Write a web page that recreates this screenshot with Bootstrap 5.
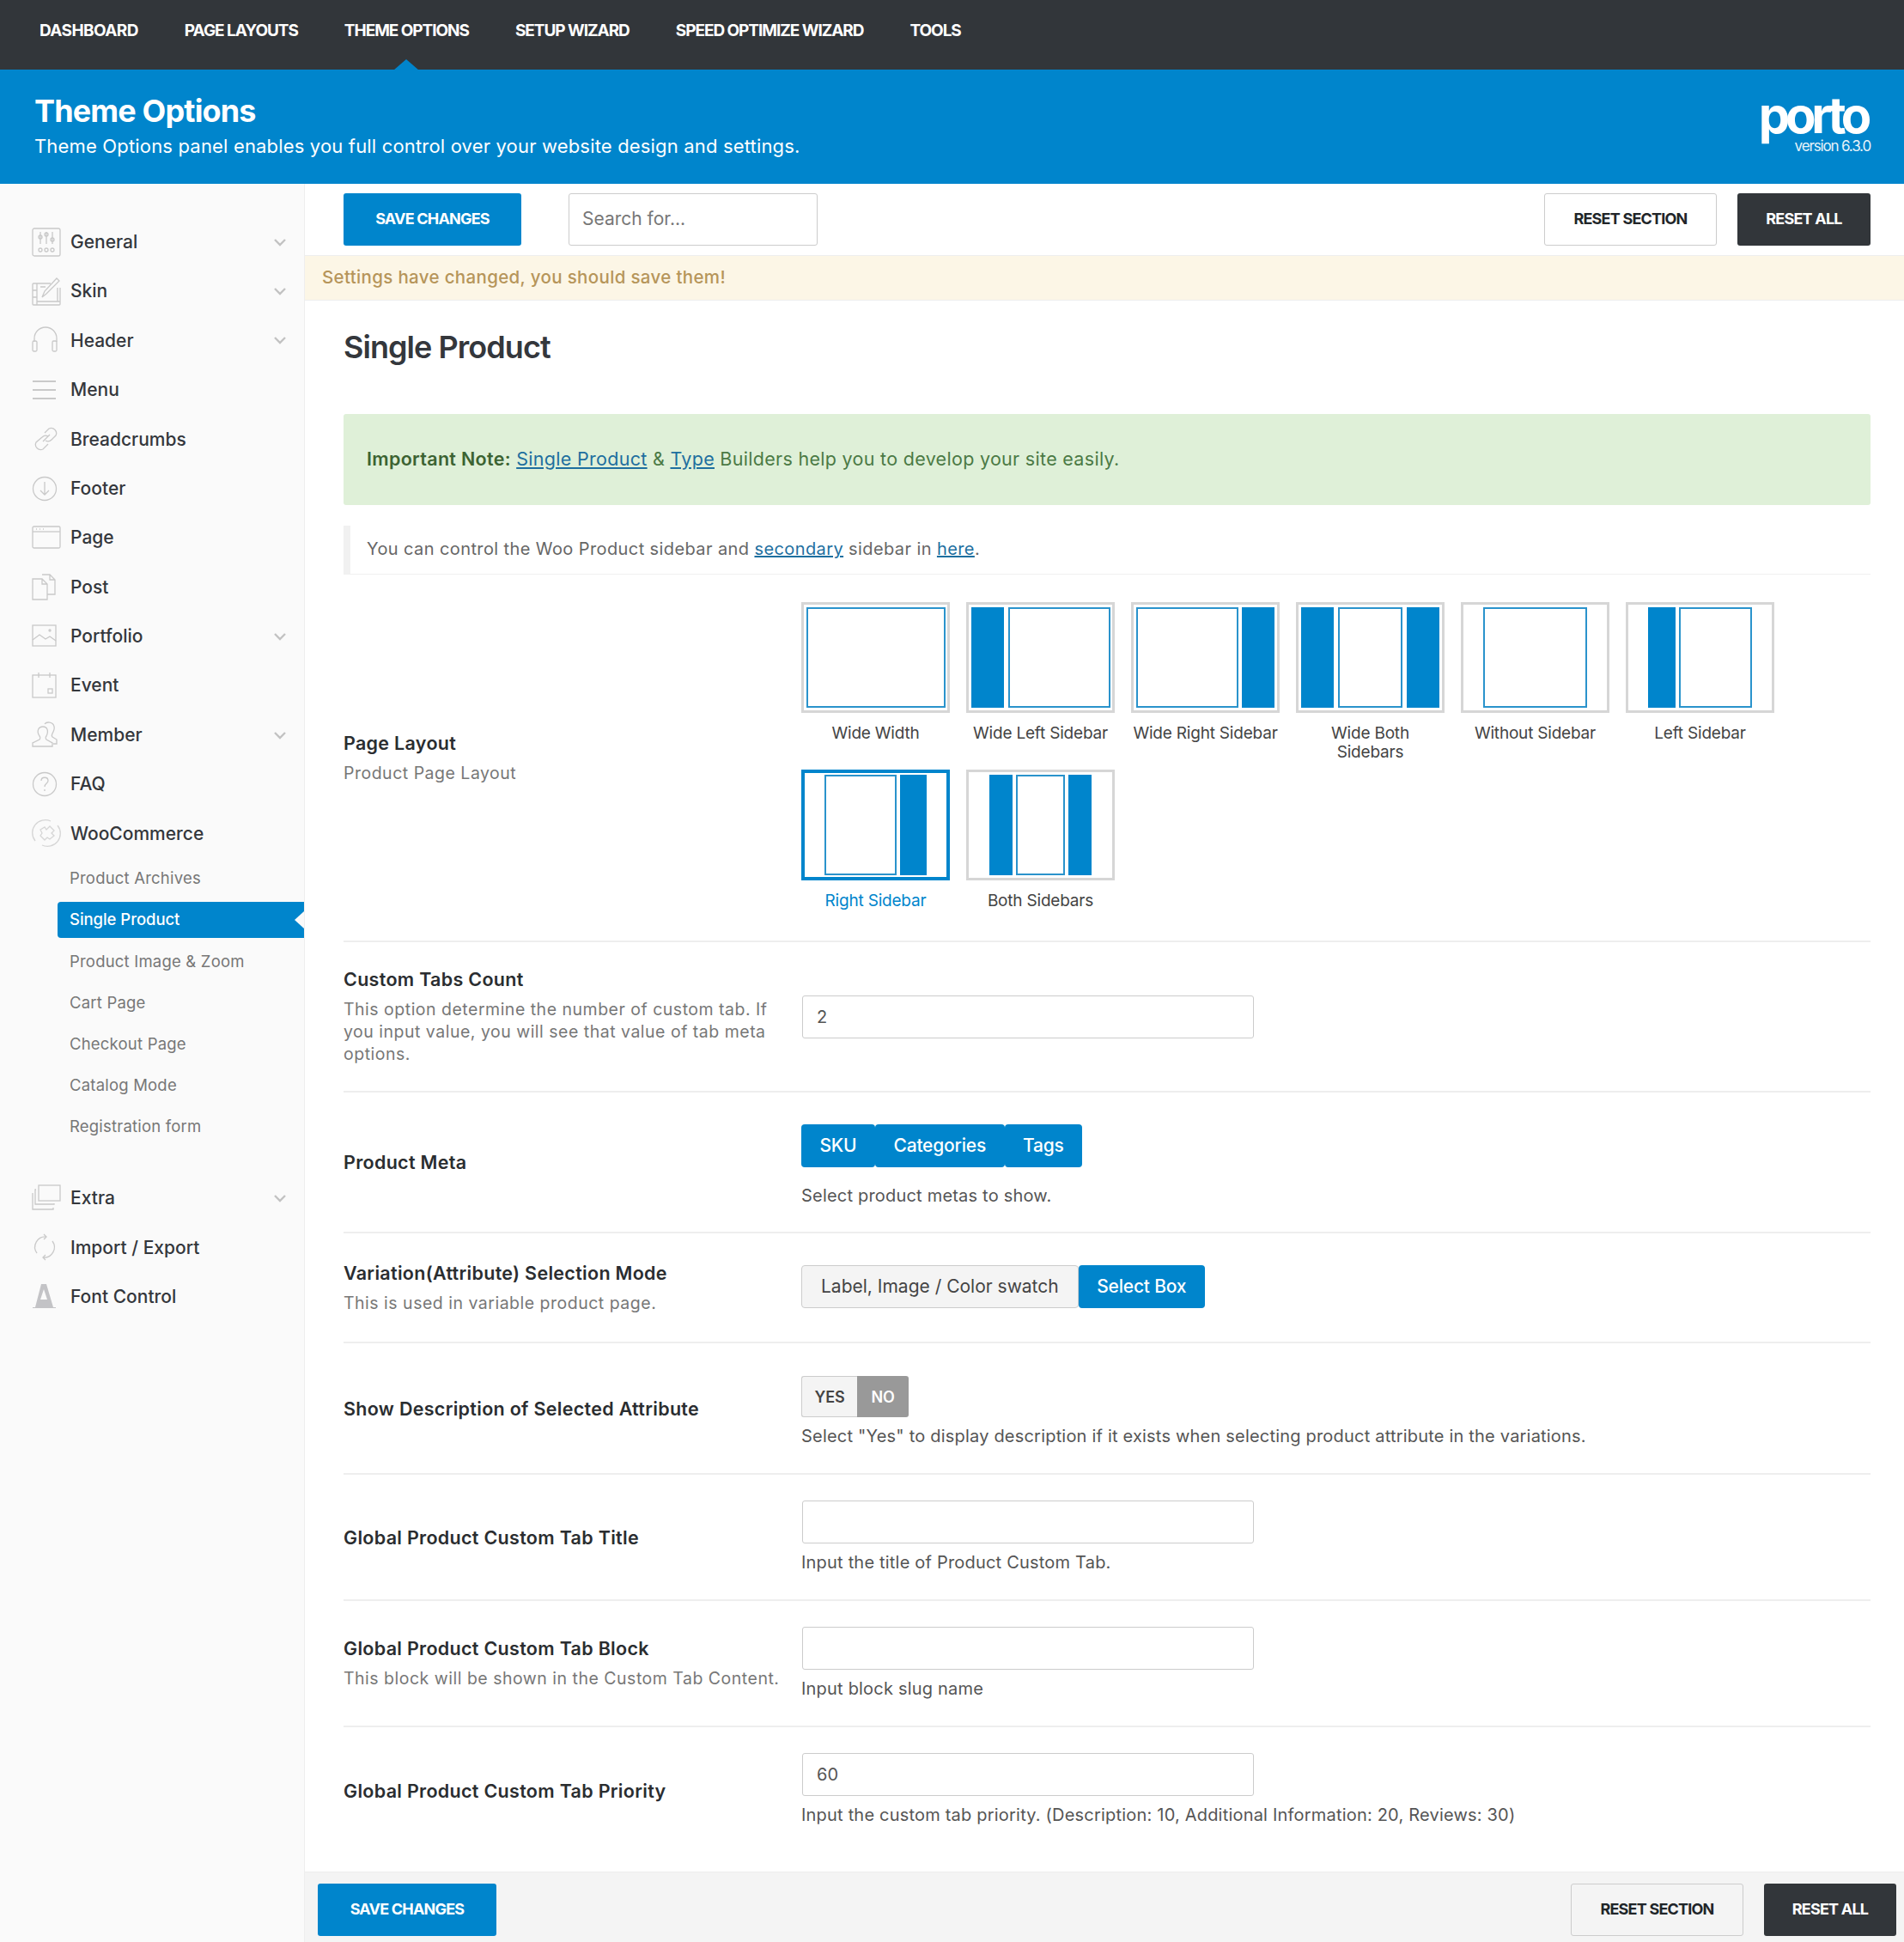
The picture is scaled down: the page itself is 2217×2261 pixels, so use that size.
<!DOCTYPE html>
<html lang="en">
<head>
  <meta charset="UTF-8">
  <meta name="viewport" content="width=device-width, initial-scale=1.0">
  <link href="https://cdn.jsdelivr.net/npm/bootstrap@5.3.2/dist/css/bootstrap.min.css" rel="stylesheet">
  <title>Theme Options</title>
  <style>
    body { font-family: Inter, "Open Sans", sans-serif; font-size: 19px; color: #777; background: #fff; width: 2217px; height: 2261px; overflow: hidden; }
    a { color: #1e6f9f; }

    .top-bar { background: #32363a; height: 81px; padding: 0 0 9px 46px; gap: 54px; }
    .top-bar a { color: #fff; text-decoration: none; font-size: 19px; font-weight: 700; letter-spacing: -1.05px; position: relative; }
    .top-bar a:first-child { letter-spacing: -.6px; }
    .top-bar a.on::after { content: ""; position: absolute; left: 50%; margin-left: -15px; bottom: -32px; border: 15px solid transparent; border-top: 0; border-bottom: 13px solid #0085cc; }

    .head-band { background: #0085cc; height: 133px; padding: 0 39px 0 40px; color: #fff; }
    .head-intro { padding-bottom: 3px; }
    .head-band h1 { font-size: 36px; font-weight: 700; letter-spacing: -.85px; margin: 0 0 4px; line-height: 44px; }
    .head-band p { font-size: 22px; margin: 0; line-height: 30px; letter-spacing: .17px; }
    .porto-logo { text-align: right; line-height: 1; margin-bottom: 7px; }
    .porto-name { font-size: 58px; font-weight: 700; letter-spacing: -5.4px; line-height: 50px; display: block; margin-right: 4px; }
    .porto-ver { font-size: 17px; letter-spacing: -1.15px; display: block; margin-top: 3px; opacity: .9; }

    .side-col { width: 355px; flex: 0 0 355px; background: #fafafa; border-right: 1px solid #eee; padding-top: 39px; height: 2047px; }
    .side-item { height: 57.4px; padding: 0 21px 0 37px; color: #34373c; font-size: 21px; font-weight: 500; }
    .side-item svg.ico { width: 34px; height: 34px; flex: none; margin-right: 11px; fill: none; stroke: #c9c9c9; stroke-width: 1.3; }
    .side-item svg.chev { width: 14px; height: 10px; fill: none; stroke: #c2c2c2; stroke-width: 2.4; margin-left: auto; }
    .sub-menu { padding-bottom: 30px; }
    .sub-item { height: 48.2px; padding-left: 81px; font-size: 18.5px; color: #777; letter-spacing: .2px; }
    .sub-item.on { height: 42px; margin: 3px 0 3.2px 67px; padding-left: 14px; background: #0085cc; color: #fff; font-weight: 500; letter-spacing: -.05px; border-radius: 4px 0 0 4px; position: relative; }
    .sub-item.on::after { content: ""; position: absolute; right: 0; top: 11px; border: 10px solid transparent; border-left: 0; border-right: 11px solid #fafafa; }

    .main-col { flex: 1; min-width: 0; position: relative; }
    .tool-row { height: 83px; padding: 11px 39px 11px 45px; }
    .act-btn { height: 61px; font-size: 18px; font-weight: 700; letter-spacing: -.8px; border-radius: 3px; padding: 0 0 2px; text-transform: uppercase; display: flex; align-items: center; justify-content: center; }
    .act-save { background: #0085cc; color: #fff; border: 0; width: 207px; }
    .act-reset { background: transparent; color: #212529; border: 1px solid #ccc; width: 201px; }
    .act-all { background: #32363a; color: #fff; border: 0; width: 155px; }
    .search-box { width: 290px; height: 61px; margin-left: 55px; border-radius: 3px; border-color: #ccc; font-size: 21px; padding: 0 15px 2px; color: #777; }
    .search-box::placeholder { color: #777; }
    .warn-band { height: 53px; background: #fcf6e6; border-top: 1px solid #eee; border-bottom: 1px solid #eee; padding-left: 20px; color: #b6955a; font-weight: 500; font-size: 20.5px; letter-spacing: .34px; }
    .page-body { padding: 0 39px 0 45px; }
    .page-title { font-size: 36px; font-weight: 600; letter-spacing: -.95px; color: #34373c; height: 132px; padding-top: 31px; margin: 0; line-height: 46px; }
    .note-ok { height: 106px; background: #dff0d8; border-radius: 3px; color: #4b7a45; padding: 0 0 2px 27px; font-size: 21.5px; margin-bottom: 24px; letter-spacing: .3px; }
    .note-ok b { color: #3c6332; font-weight: 600; }
    .note-info { height: 57px; border-left: 8px solid #f1f1f1; border-bottom: 1px solid #f1f1f1; padding: 0 0 2px 19px; font-size: 20px; color: #666; letter-spacing: .4px; }

    .opt-row { border-bottom: 2px solid #eee; }
    .r-layout { height: 428px; }
    .r-layout .opt-field { padding-top: 9px; }
    .r-tabs { height: 175px; }
    .r-meta { height: 164px; }
    .r-meta .opt-field { padding-top: 8px; }
    .r-var { height: 128px; }
    .r-var .opt-field { padding-bottom: 2px; }
    .r-desc { height: 153px; }
    .r-desc .opt-field { padding-top: 8px; }
    .r-glob { height: 147px; }
    .r-last { height: 147px; border-bottom: 0; }
    .r-last .opt-field { padding-bottom: 3px; }
    .opt-label { width: 533px; flex: 0 0 533px; padding-right: 21px; line-height: 26px; font-size: 19.5px; letter-spacing: .5px; }
    .opt-label strong { display: block; color: #2a2d30; font-weight: 600; font-size: 21.5px; letter-spacing: .3px; line-height: 26px; }
    .opt-sub { display: block; margin-top: 9px; }
    .opt-field { flex: 1; color: #555; font-size: 20px; letter-spacing: .2px; }
    .opt-field p { margin: 0; line-height: 26px; }
    .opt-input { width: 526px; height: 50px; margin-left: 1px; margin-bottom: 9px; border-radius: 3px; border-color: #ccc; font-size: 20px; padding: 0 16px; color: #555; }

    .thumb-grid { width: 1160px; gap: 19px; }
    .thumb-item { width: 173px; height: 176px; text-align: center; font-size: 19px; line-height: 22px; color: #444; letter-spacing: -.2px; }
    .thumb-item svg { display: block; width: 173px; height: 129px; margin-bottom: 13px; }
    .thumb-item.sel { color: #0085cc; }
    .t-frame { fill: #fff; stroke: #d6d6d6; stroke-width: 3; }
    .sel .t-frame { stroke: #0085cc; stroke-width: 4; }
    .t-side { fill: #0085cc; }
    .t-main { fill: #fff; stroke: #2a93cc; stroke-width: 2; }

    .chip-group { margin-bottom: 20px; }
    .chip { height: 50px; font-size: 21px; padding: 0 21.5px; border-radius: 4px; display: flex; align-items: center; background: #0085cc; color: #fff; font-weight: 500; border: 0; letter-spacing: -.2px; }
    .chip.off { background: #f4f4f4; color: #444; border: 1px solid #ccc; font-weight: 400; letter-spacing: 0; padding: 0 22px; }
    .toggle-group { margin-bottom: 9px; }
    .tog { height: 48px; display: flex; align-items: center; justify-content: center; font-size: 18px; font-weight: 600; letter-spacing: -.2px; }
    .tog-yes { width: 65px; background: #f4f4f4; border: 1px solid #ccc; border-right: 0; border-radius: 3px 0 0 3px; color: #444; }
    .tog-no { width: 60px; background: #999; color: #fff; border-radius: 0 3px 3px 0; }

    .foot-bar { position: absolute; left: 0; right: 0; top: 1965px; height: 82px; background: #f4f4f4; border-top: 1px solid #eee; padding: 12px 9px 0 15px; }
    .foot-bar .act-save { width: 208px; margin-top: 1px; }
    .foot-bar .act-reset { margin-top: 1px; }
    .foot-bar .act-all { width: 154px; margin-top: 1px; }
  </style>
</head>
<body>
  <nav class="top-bar d-flex align-items-center">
    <a href="#">DASHBOARD</a>
    <a href="#">PAGE LAYOUTS</a>
    <a href="#" class="on">THEME OPTIONS</a>
    <a href="#">SETUP WIZARD</a>
    <a href="#">SPEED OPTIMIZE WIZARD</a>
    <a href="#">TOOLS</a>
  </nav>

  <header class="head-band d-flex align-items-center justify-content-between">
    <div class="head-intro">
      <h1>Theme Options</h1>
      <p>Theme Options panel enables you full control over your website design and settings.</p>
    </div>
    <div class="porto-logo">
      <span class="porto-name">porto</span>
      <span class="porto-ver">version 6.3.0</span>
    </div>
  </header>

  <div class="d-flex">
    <aside class="side-col">
      <div class="side-item d-flex align-items-center">
        <svg class="ico" viewBox="0 0 34 34"><rect x="1" y="1" width="32" height="32" rx="2"/><path d="M10 5v14M17 5v14M24 5v14"/><circle cx="10" cy="11" r="2"/><circle cx="17" cy="8" r="2"/><circle cx="24" cy="14" r="2"/><circle cx="10" cy="26" r="2"/><circle cx="17" cy="26" r="2"/><circle cx="24" cy="26" r="2"/></svg>
        General
        <svg class="chev" viewBox="0 0 14 10"><path d="M1 2l6 6 6-6"/></svg>
      </div>
      <div class="side-item d-flex align-items-center">
        <svg class="ico" viewBox="0 0 34 34"><path d="M22 8H2a1 1 0 0 0-1 1v23a1 1 0 0 0 1 1h30a1 1 0 0 0 1-1V13"/><path d="M6 8v25M1 16h5M1 24h5M6 29h27M12 24l3-7L29 2l3 3-15 15zM12 24l5-4"/><path d="M10 12h6M30 13v16"/></svg>
        Skin
        <svg class="chev" viewBox="0 0 14 10"><path d="M1 2l6 6 6-6"/></svg>
      </div>
      <div class="side-item d-flex align-items-center">
        <svg class="ico" viewBox="0 0 34 34"><path d="M3 19v-4a13 13 0 0 1 26 0v4"/><rect x="1" y="18" width="5" height="12" rx="1.5"/><rect x="22" y="18" width="5" height="12" rx="1.5" transform="translate(2)"/></svg>
        Header
        <svg class="chev" viewBox="0 0 14 10"><path d="M1 2l6 6 6-6"/></svg>
      </div>
      <div class="side-item d-flex align-items-center">
        <svg class="ico" viewBox="0 0 34 34"><path d="M1 7h27M1 17h27M1 27h27" stroke-width="1.8"/></svg>
        Menu
      </div>
      <div class="side-item d-flex align-items-center">
        <svg class="ico" viewBox="0 0 34 34"><path d="M13 20l8-8M15 10l5-5a6 6 0 0 1 8 8l-5 5a6 6 0 0 1-7 1M19 14a6 6 0 0 0-7 1l-7 6a6 6 0 0 0 8 8l6-6"/></svg>
        Breadcrumbs
      </div>
      <div class="side-item d-flex align-items-center">
        <svg class="ico" viewBox="0 0 34 34"><circle cx="15" cy="17" r="13.5"/><path d="M15 9v15M10 19l5 5 5-5"/></svg>
        Footer
      </div>
      <div class="side-item d-flex align-items-center">
        <svg class="ico" viewBox="0 0 34 34"><rect x="1" y="4" width="32" height="25" rx="1.5"/><path d="M1 10h32"/><path d="M5 7h1M9 7h1M13 7h1"/></svg>
        Page
      </div>
      <div class="side-item d-flex align-items-center">
        <svg class="ico" viewBox="0 0 34 34"><path d="M1 8h11l6 6v18H1zM12 8v6h6M12 3h9l6 6v17h-9M21 3v6h6"/></svg>
        Post
      </div>
      <div class="side-item d-flex align-items-center">
        <svg class="ico" viewBox="0 0 34 34"><rect x="1" y="4" width="27" height="24"/><path d="M1 21l8-6 7 5 5-3 7 5"/><circle cx="21" cy="10" r="1"/></svg>
        Portfolio
        <svg class="chev" viewBox="0 0 14 10"><path d="M1 2l6 6 6-6"/></svg>
      </div>
      <div class="side-item d-flex align-items-center">
        <svg class="ico" viewBox="0 0 34 34"><rect x="1" y="5" width="27" height="26"/><path d="M8 2v6M21 2v6"/><rect x="19" y="21" width="5" height="5"/></svg>
        Event
      </div>
      <div class="side-item d-flex align-items-center">
        <svg class="ico" viewBox="0 0 34 34"><path d="M1 30v-4l8-4c1-1 1-3 0-4-4-6-1-11 4-11s7 5 4 11c-1 1-1 3 0 4l7 4v4zM15 4c2-3 10-3 11 3 1 3-1 6-2 8-1 2-1 3 0 4l5 3v5h-4"/></svg>
        Member
        <svg class="chev" viewBox="0 0 14 10"><path d="M1 2l6 6 6-6"/></svg>
      </div>
      <div class="side-item d-flex align-items-center">
        <svg class="ico" viewBox="0 0 34 34"><circle cx="15" cy="17" r="13.5"/><path d="M11 13c0-5 8-5 8 0 0 3-4 3-4 7M15 23v2"/></svg>
        FAQ
      </div>
      <div class="side-item d-flex align-items-center">
        <svg class="ico" viewBox="0 0 34 34" stroke-opacity=".75"><path d="M4 26A15 15 0 0 1 22 3M30 8a15 15 0 0 1-18 23"/><path d="M10 13l5-3 2 3 4-4 5 5-3 3 3 3-5 4-3-2-3 3-5-5 2-3z"/></svg>
        WooCommerce
      </div>
      <div class="sub-menu">
        <div class="sub-item d-flex align-items-center">Product Archives</div>
        <div class="sub-item on d-flex align-items-center">Single Product</div>
        <div class="sub-item d-flex align-items-center">Product Image &amp; Zoom</div>
        <div class="sub-item d-flex align-items-center">Cart Page</div>
        <div class="sub-item d-flex align-items-center">Checkout Page</div>
        <div class="sub-item d-flex align-items-center">Catalog Mode</div>
        <div class="sub-item d-flex align-items-center">Registration form</div>
      </div>
      <div class="side-item d-flex align-items-center">
        <svg class="ico" viewBox="0 0 34 34"><rect x="8" y="2" width="25" height="18"/><path d="M5 7H4v17h22v-1M1 11v19h24v-2"/></svg>
        Extra
        <svg class="chev" viewBox="0 0 14 10"><path d="M1 2l6 6 6-6"/></svg>
      </div>
      <div class="side-item d-flex align-items-center">
        <svg class="ico" viewBox="0 0 34 34" stroke-width="1.8"><path d="M6 24A12 12 0 0 1 17 5M24 10a12 12 0 0 1-11 19M14 2l3 3-3 3M16 26l-3 3 3 3"/></svg>
        Import / Export
      </div>
      <div class="side-item d-flex align-items-center">
        <svg class="ico" viewBox="0 0 34 34"><path d="M11 2h6l8 27h3v1H1v-1h3zM10 20h8l-4-12z" fill="#c3c3c6" stroke="none" fill-rule="evenodd"/></svg>
        Font Control
      </div>
    </aside>

    <main class="main-col">
      <div class="tool-row d-flex">
        <button class="act-btn act-save">Save Changes</button>
        <input class="form-control search-box" type="text" placeholder="Search for...">
        <button class="act-btn act-reset ms-auto">Reset Section</button>
        <button class="act-btn act-all ms-4">Reset All</button>
      </div>
      <div class="warn-band d-flex align-items-center">Settings have changed, you should save them!</div>

      <div class="page-body">
        <h2 class="page-title">Single Product</h2>
        <div class="note-ok d-flex align-items-center">
          <span><b>Important Note:</b> <a href="#">Single Product</a> &amp; <a href="#">Type</a> Builders help you to develop your site easily.</span>
        </div>
        <div class="note-info d-flex align-items-center">
          <span>You can control the Woo Product sidebar and <a href="#">secondary</a> sidebar in <a href="#">here</a>.</span>
        </div>

        <div class="opt-row r-layout d-flex align-items-center">
          <div class="opt-label"><strong>Page Layout</strong><span class="opt-sub">Product Page Layout</span></div>
          <div class="opt-field">
            <div class="thumb-grid d-flex flex-wrap">
              <div class="thumb-item">
                <svg viewBox="0 0 173 129"><rect class="t-frame" x="1.5" y="1.5" width="170" height="126"/><rect class="t-main" x="7" y="7" width="160" height="115"/></svg>
                Wide Width
              </div>
              <div class="thumb-item">
                <svg viewBox="0 0 173 129"><rect class="t-frame" x="1.5" y="1.5" width="170" height="126"/><rect class="t-side" x="6" y="6" width="38" height="117"/><rect class="t-main" x="50" y="7" width="117" height="115"/></svg>
                Wide Left Sidebar
              </div>
              <div class="thumb-item">
                <svg viewBox="0 0 173 129"><rect class="t-frame" x="1.5" y="1.5" width="170" height="126"/><rect class="t-main" x="7" y="7" width="117" height="115"/><rect class="t-side" x="129" y="6" width="38" height="117"/></svg>
                Wide Right Sidebar
              </div>
              <div class="thumb-item">
                <svg viewBox="0 0 173 129"><rect class="t-frame" x="1.5" y="1.5" width="170" height="126"/><rect class="t-side" x="6" y="6" width="38" height="117"/><rect class="t-main" x="50" y="7" width="73" height="115"/><rect class="t-side" x="129" y="6" width="38" height="117"/></svg>
                Wide Both<br>Sidebars
              </div>
              <div class="thumb-item">
                <svg viewBox="0 0 173 129"><rect class="t-frame" x="1.5" y="1.5" width="170" height="126"/><rect class="t-main" x="27" y="7" width="119" height="115"/></svg>
                Without Sidebar
              </div>
              <div class="thumb-item">
                <svg viewBox="0 0 173 129"><rect class="t-frame" x="1.5" y="1.5" width="170" height="126"/><rect class="t-side" x="26" y="6" width="32" height="117"/><rect class="t-main" x="63" y="7" width="83" height="115"/></svg>
                Left Sidebar
              </div>
              <div class="thumb-item sel">
                <svg viewBox="0 0 173 129"><rect class="t-frame" x="2" y="2" width="169" height="125"/><rect class="t-main" x="28" y="7" width="82" height="115"/><rect class="t-side" x="115" y="6" width="31" height="117"/></svg>
                Right Sidebar
              </div>
              <div class="thumb-item">
                <svg viewBox="0 0 173 129"><rect class="t-frame" x="1.5" y="1.5" width="170" height="126"/><rect class="t-side" x="27" y="6" width="27" height="117"/><rect class="t-main" x="59" y="7" width="55" height="115"/><rect class="t-side" x="119" y="6" width="27" height="117"/></svg>
                Both Sidebars
              </div>
            </div>
          </div>
        </div>

        <div class="opt-row r-tabs d-flex align-items-center">
          <div class="opt-label"><strong>Custom Tabs Count</strong><span class="opt-sub">This option determine the number of custom tab. If you input value, you will see that value of tab meta options.</span></div>
          <div class="opt-field"><input class="form-control opt-input mb-0" type="text" value="2"></div>
        </div>

        <div class="opt-row r-meta d-flex align-items-center">
          <div class="opt-label"><strong>Product Meta</strong></div>
          <div class="opt-field">
            <div class="chip-group d-flex"><span class="chip">SKU</span><span class="chip">Categories</span><span class="chip">Tags</span></div>
            <p>Select product metas to show.</p>
          </div>
        </div>

        <div class="opt-row r-var d-flex align-items-center">
          <div class="opt-label"><strong>Variation(Attribute) Selection Mode</strong><span class="opt-sub">This is used in variable product page.</span></div>
          <div class="opt-field">
            <div class="d-flex"><span class="chip off">Label, Image / Color swatch</span><span class="chip">Select Box</span></div>
          </div>
        </div>

        <div class="opt-row r-desc d-flex align-items-center">
          <div class="opt-label"><strong>Show Description of Selected Attribute</strong></div>
          <div class="opt-field">
            <div class="toggle-group d-flex"><span class="tog tog-yes">YES</span><span class="tog tog-no">NO</span></div>
            <p>Select "Yes" to display description if it exists when selecting product attribute in the variations.</p>
          </div>
        </div>

        <div class="opt-row r-glob d-flex align-items-center">
          <div class="opt-label"><strong>Global Product Custom Tab Title</strong></div>
          <div class="opt-field">
            <input class="form-control opt-input" type="text">
            <p>Input the title of Product Custom Tab.</p>
          </div>
        </div>

        <div class="opt-row r-glob d-flex align-items-center">
          <div class="opt-label"><strong>Global Product Custom Tab Block</strong><span class="opt-sub">This block will be shown in the Custom Tab Content.</span></div>
          <div class="opt-field">
            <input class="form-control opt-input" type="text">
            <p>Input block slug name</p>
          </div>
        </div>

        <div class="opt-row r-last d-flex align-items-center">
          <div class="opt-label"><strong>Global Product Custom Tab Priority</strong></div>
          <div class="opt-field">
            <input class="form-control opt-input" type="text" value="60">
            <p>Input the custom tab priority. (Description: 10, Additional Information: 20, Reviews: 30)</p>
          </div>
        </div>
      </div>

      <div class="foot-bar d-flex">
        <button class="act-btn act-save">Save Changes</button>
        <button class="act-btn act-reset ms-auto">Reset Section</button>
        <button class="act-btn act-all ms-4">Reset All</button>
      </div>
    </main>
  </div>

  <script src="https://cdn.jsdelivr.net/npm/bootstrap@5.3.2/dist/js/bootstrap.bundle.min.js"></script>
</body>
</html>
